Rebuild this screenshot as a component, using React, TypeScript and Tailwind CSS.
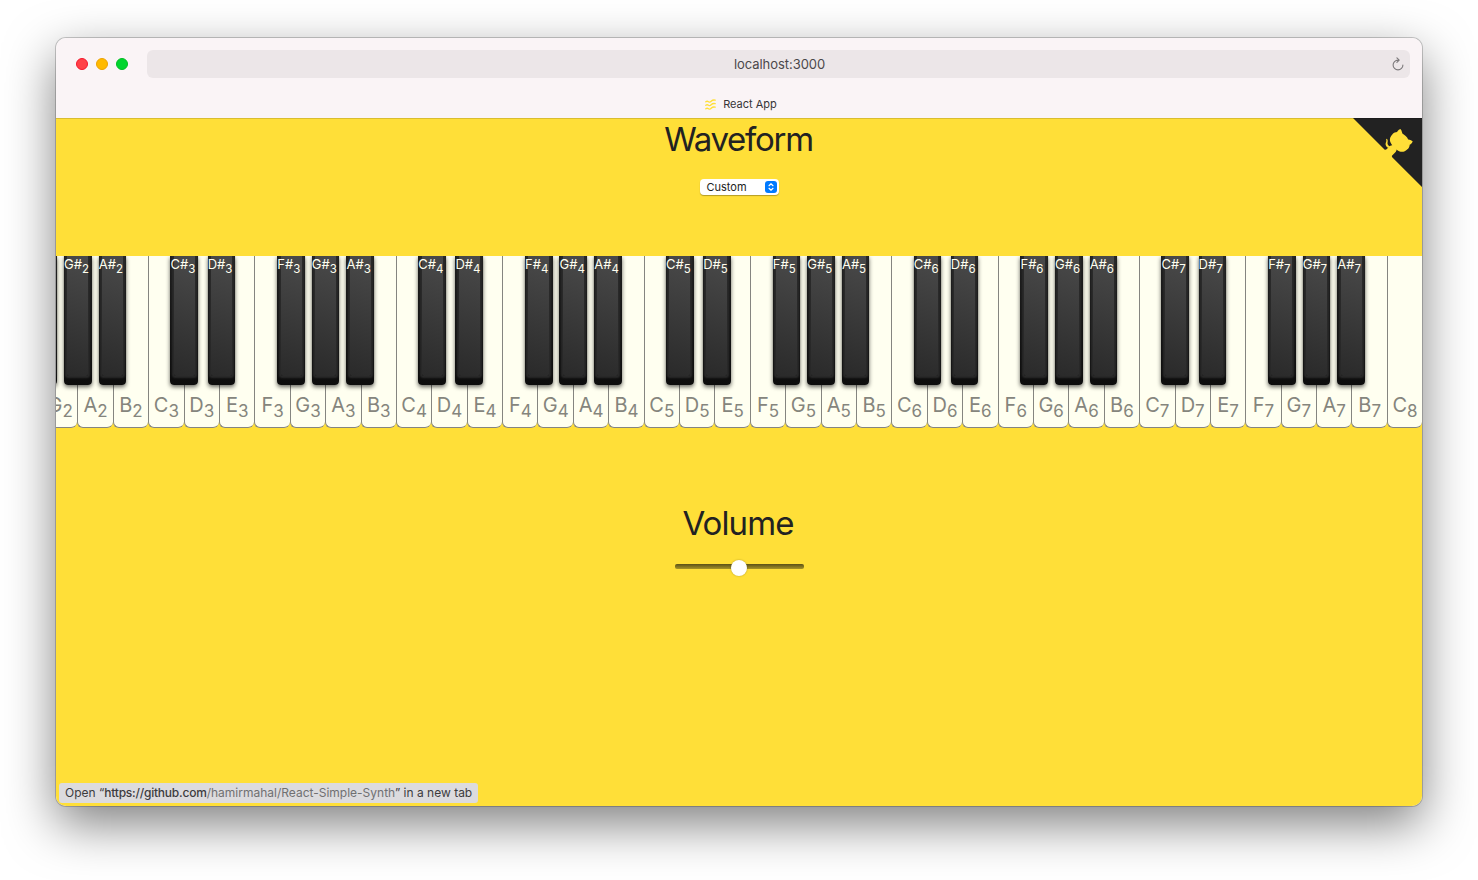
import React from "react";

type Note = { name: string; octave: number; muted?: boolean };

const LETTERS = ["C", "D", "E", "F", "G", "A", "B"];

const SHARP_OFFSET: Record<string, string> = {
  C: "left-[21.3px]",
  D: "left-[23.1px]",
  F: "left-[21.9px]",
  G: "left-[21px]",
  A: "left-[20.3px]",
};

const NOTES: Note[] = [
  { name: "F", octave: 2, muted: true },
  ...["G", "A", "B"].map((name) => ({ name, octave: 2 })),
  ...[3, 4, 5, 6, 7].flatMap((octave) => LETTERS.map((name) => ({ name, octave }))),
  { name: "C", octave: 8 },
];

function BlackKey({ name, octave, muted }: Note) {
  return (
    <div
      className={`absolute top-0 z-10 h-[129px] w-[27.6px] rounded-b-[4px] bg-linear-to-b from-[#1f1f1f] to-[#0d0d0d] shadow-[0_2px_4px_rgba(0,0,0,0.6)] ${SHARP_OFFSET[name]}`}
    >
      <div className="mx-auto h-[120px] w-[21px] rounded-b-[2px] bg-linear-[20deg,#2a2a2a,#4a4a4a] shadow-[0_0_2px_1.5px_#2b2b2b]" />
      {!muted && (
        <span className="absolute top-0 left-0 text-[13px] leading-[16px] font-[370] whitespace-nowrap text-[#fffff0]">
          {name}#<sub className="bottom-[-3.5px] text-[11.5px]">{octave}</sub>
        </span>
      )}
    </div>
  );
}

function WhiteKey({ name, octave, muted }: Note) {
  return (
    <div className="relative flex h-[172px] w-[35.4px] shrink-0 items-end justify-center rounded-b-[6px] border-b border-l border-[#858580] bg-[#fffff0] pb-[7px]">
      {!muted && (
        <span className="text-[20px] leading-[30px] whitespace-nowrap text-[#85857d]">
          {name}
          <sub className="bottom-[-5px] text-[17px]">{octave}</sub>
        </span>
      )}
      {SHARP_OFFSET[name] && octave < 8 && <BlackKey name={name} octave={octave} muted={muted} />}
    </div>
  );
}

function GithubCorner() {
  return (
    <svg viewBox="0 0 250 250" className="absolute top-0 right-0 size-[69px]" aria-hidden="true">
      <path d="M0,0 L115,115 L130,115 L142,142 L250,250 L250,0 Z" fill="#222" />
      <path
        d="M128.3,109.0 C113.8,99.7 119.0,89.6 119.0,89.6 C122.0,82.7 120.5,78.6 120.5,78.6 C119.2,72.0 123.4,76.3 123.4,76.3 C127.3,80.9 125.5,87.3 125.5,87.3 C122.9,97.6 130.6,101.9 134.4,103.2"
        fill="#ffdf38"
      />
      <path
        d="M115.0,115.0 C114.9,115.1 118.7,116.5 119.8,115.4 L133.7,101.6 C136.9,99.2 139.9,98.4 142.2,98.6 C133.8,88.0 127.5,74.4 143.8,58.0 C148.5,53.4 154.0,51.2 159.7,51.0 C160.3,49.4 163.2,43.6 171.4,40.1 C171.4,40.1 176.1,42.5 178.8,56.2 C183.1,58.6 187.2,61.8 190.9,65.4 C194.5,69.0 197.7,73.2 200.1,77.6 C213.8,80.2 216.3,84.9 216.3,84.9 C212.7,93.1 206.9,96.0 205.4,96.6 C205.1,102.4 203.0,107.8 198.3,112.5 C181.9,128.9 168.3,122.5 157.7,114.1 C157.9,116.9 156.7,120.9 152.7,124.9 L141.0,136.5 C139.8,137.7 141.6,141.9 141.8,141.8 Z"
        fill="#ffdf38"
      />
    </svg>
  );
}

function Toolbar() {
  return (
    <header className="h-[80px] bg-[#faf4f6]">
      <div className="flex items-center pt-[12px] pr-[12px] pl-[20px]">
        <div className="flex gap-2">
          <span className="size-3 rounded-full border border-[#f5172c] bg-[#ff4147]" />
          <span className="size-3 rounded-full border border-[#eda200] bg-[#ffba00]" />
          <span className="size-3 rounded-full border border-[#00bd22] bg-[#00d52e]" />
        </div>
        <div className="relative ml-[19px] flex h-[28px] flex-1 items-center justify-center rounded-[6px] bg-[#ece6e8] text-[13px] text-[#4b484a]">
          <span className="pt-px pl-[2px] tracking-[-0.05px]">localhost:3000</span>
          <svg viewBox="0 0 12 14" className="absolute top-[7px] right-[6px] h-[14px] w-[12px]" fill="none" stroke="#7c797b" strokeWidth="1.1" strokeLinecap="round" strokeLinejoin="round">
            <path d="M6.8 3.1H6A4.9 4.9 0 1 0 10.9 8M4.9 .8L7.2 3.1L4.9 5.4" />
          </svg>
        </div>
      </div>
      <div className="mt-[12px] flex h-[28px] items-center justify-center gap-[7px] pl-[4px] text-[11px] text-[#373536]">
        <svg viewBox="0 0 11 11" className="size-[11px]" fill="none" stroke="#ffdf38" strokeWidth="1.3" strokeLinecap="round">
          <path d="M.8 2.8C3 1 3.6 3.8 5.2 3S7 .2 10.2 1.2" />
          <path d="M.8 6.3C3 4.5 3.6 7.3 5.2 6.5S7 3.7 10.2 4.7" />
          <path d="M.8 9.8C3 8 3.6 10.8 5.2 10S7 7.2 10.2 8.2" />
        </svg>
        <span>React App</span>
      </div>
    </header>
  );
}

export default function App() {
  return (
    <div className="h-[880px] w-[1478px] overflow-hidden bg-white px-[56px] pt-[38px] font-['Inter','Liberation_Sans',sans-serif]">
      <div className="rounded-[10px] shadow-[0_0_0_1px_rgba(0,0,0,0.2),0_18px_50px_rgba(0,0,0,0.5)]">
        <div className="h-[768px] overflow-hidden rounded-[10px]">
          <Toolbar />
          <main className="relative flex h-[688px] flex-col items-center bg-[#ffdf38]">
            <h1 className="mt-[1px] mr-[1px] text-[33px] leading-[41px] font-[370] tracking-[-1.3px] text-[#222]">Waveform</h1>
            <button className="mt-[19px] ml-px flex h-[16px] w-[79px] items-center justify-between rounded-[4px] bg-white pr-[2px] pl-[6.5px] text-[11px] leading-[16px] text-[#222] shadow-[0_1px_1px_rgba(0,0,0,0.3)]">
              Custom
              <span className="flex size-[12px] items-center justify-center rounded-[3px] bg-[#007aff]">
                <svg viewBox="0 0 12 12" className="size-[12px]" fill="none" stroke="white" strokeWidth="1.2" strokeLinecap="round" strokeLinejoin="round">
                  <path d="M4 4.7L6 2.8L8 4.7M4 7.3L6 9.2L8 7.3" />
                </svg>
              </span>
            </button>
            <div className="mt-[61px] h-[172px] w-full overflow-hidden">
              <div className="-ml-[49.4px] flex">
                {NOTES.map((n) => (
                  <WhiteKey key={n.name + n.octave} {...n} />
                ))}
              </div>
            </div>
            <h2 className="mt-[75px] mr-[2px] text-[33px] leading-[41px] font-[370] tracking-[-0.9px] text-[#222]">Volume</h2>
            <div className="mt-[20px] flex h-[5px] w-[129px] items-center justify-center rounded-[2px] bg-linear-to-b from-[#5b5117] to-[#a89427]">
              <span className="mt-[3px] size-[16px] shrink-0 rounded-full bg-white shadow-[0_0_2px_rgba(0,0,0,0.3)]" />
            </div>
            <div className="absolute bottom-[3px] left-[3px] h-[20px] w-[419px] rounded-[3px] bg-[#dcdbde] pl-[6px] text-[12px] leading-[20px] whitespace-nowrap text-[#3c3c3e]">
              Open “<span className="font-[550] tracking-[-0.22px]">https://github.com</span>
              <span className="text-[#707072]">/hamirmahal/React-Simple-Synth</span>” in a new tab
            </div>
            <GithubCorner />
            <div className="absolute inset-x-0 top-0 h-px bg-black/15" />
          </main>
        </div>
      </div>
    </div>
  );
}
